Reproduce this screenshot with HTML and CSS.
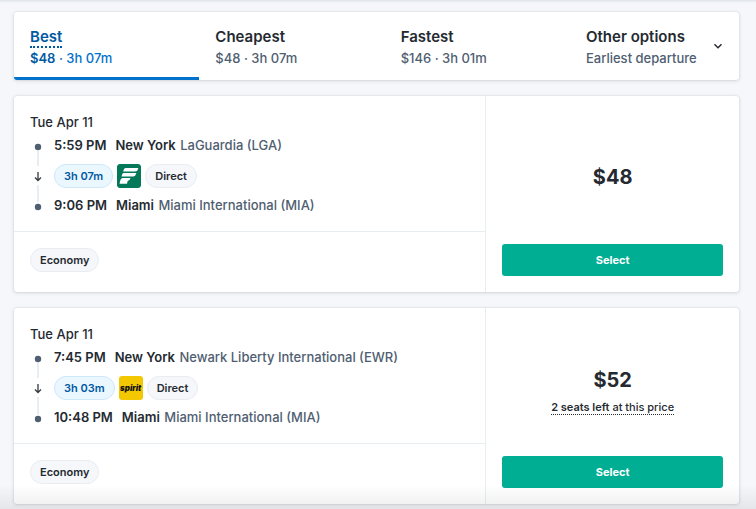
FILE: index.html
```html
<!DOCTYPE html>
<html lang="en">
<head>
<meta charset="utf-8">
<meta name="viewport" content="width=device-width, initial-scale=1">
<title>Flight results</title>
<link rel="stylesheet" href="styles.css">
</head>
<body>
<main class="results">
  <nav class="tabs" aria-label="Sort results">
    <button type="button" class="tab tab-active"><span class="tab-title"><span class="hint">Best</span></span><span class="tab-info"><b>$48</b> · 3h 07m</span></button>
    <button type="button" class="tab"><span class="tab-title">Cheapest</span><span class="tab-info">$48 · 3h 07m</span></button>
    <button type="button" class="tab"><span class="tab-title">Fastest</span><span class="tab-info">$146 · 3h 01m</span></button>
    <button type="button" class="tab tab-more">
      <span><span class="tab-title">Other options</span><span class="tab-info">Earliest departure</span></span>
      <svg class="chevron" viewBox="0 0 10 10" aria-hidden="true"><path d="M1.500 1.200 5 4.800l3.500-3.600"/></svg>
    </button>
  </nav>

  <article class="card">
    <div class="details">
      <section class="trip">
        <p class="date">Tue Apr 11</p>
        <div class="route">
          <svg class="timeline" viewBox="0 0 16 82" aria-hidden="true"><path class="rail" d="M8 17v15M8 51v17"/><circle cx="8" cy="13" r="3.200"/><circle cx="8" cy="73" r="3.200"/><path class="arrow" d="M8 38v8M5 43.500 8 46.500l3-3"/></svg>
          <div class="stops">
            <p class="stop"><b class="time">5:59 PM</b><b>New York</b> <span class="airport">LaGuardia (LGA)</span></p>
            <div class="leg">
              <span class="pill pill-time">3h 07m</span>
              <svg class="airline" viewBox="0 0 24 24" role="img" aria-label="Frontier"><rect width="24" height="24" rx="2" fill="#04795a"/><path fill="#fff" d="M8.700 4H21.300Q20.700 7.500 18 7.500H6.200Q6.800 4 8.700 4ZM6.700 9H19.300Q18.500 12.500 16 12.500H4.600Q5 9 6.700 9ZM5.500 14H13.500Q12.700 17 10.700 17.100L10 19.800H2.600Q3.300 14.300 5.500 14Z"/></svg>
              <span class="pill">Direct</span>
            </div>
            <p class="stop"><b class="time">9:06 PM</b><b>Miami</b> <span class="airport">Miami International (MIA)</span></p>
          </div>
        </div>
      </section>
      <footer class="fare"><span class="pill">Economy</span></footer>
    </div>
    <aside class="offer">
      <div class="cost"><strong class="price">$48</strong></div>
      <button type="button" class="select">Select</button>
    </aside>
  </article>

  <article class="card">
    <div class="details">
      <section class="trip">
        <p class="date">Tue Apr 11</p>
        <div class="route">
          <svg class="timeline" viewBox="0 0 16 82" aria-hidden="true"><path class="rail" d="M8 17v15M8 51v17"/><circle cx="8" cy="13" r="3.200"/><circle cx="8" cy="73" r="3.200"/><path class="arrow" d="M8 38v8M5 43.500 8 46.500l3-3"/></svg>
          <div class="stops">
            <p class="stop"><b class="time">7:45 PM</b><b>New York</b> <span class="airport">Newark Liberty International (EWR)</span></p>
            <div class="leg">
              <span class="pill pill-time">3h 03m</span>
              <span class="airline spirit">spirit</span>
              <span class="pill">Direct</span>
            </div>
            <p class="stop"><b class="time">10:48 PM</b><b>Miami</b> <span class="airport">Miami International (MIA)</span></p>
          </div>
        </div>
      </section>
      <footer class="fare"><span class="pill">Economy</span></footer>
    </div>
    <aside class="offer">
      <div class="cost"><strong class="price">$52</strong><span class="seats"><span class="hint"><b>2 seats left</b> at this price</span></span></div>
      <button type="button" class="select">Select</button>
    </aside>
  </article>
</main>
<div class="fade"></div>
</body>
</html>
```
FILE: styles.css
```css
* { box-sizing: border-box; }
body {
  margin: 0;
  background: #f5f7fa;
  color: #252a31;
  font-family: Inter, "Liberation Sans", sans-serif;
  font-size: 13px;
}
p { margin: 0; }
b { font-weight: 600; }
button { font: inherit; color: inherit; border: 0; cursor: pointer; }
.results {
  display: flex;
  flex-direction: column;
  gap: 16px;
  padding: 12px 17px 5px 14px;
  box-shadow: inset 0 3px 3px -2px #d9dde3;
}
.tabs, .card {
  display: grid;
  background: #fff;
  border-radius: 3px;
  box-shadow: 0 0 2px rgba(37, 42, 49, .16), 0 1px 4px rgba(37, 42, 49, .12);
}
.tabs { grid-template-columns: repeat(3, 1fr) 169px; overflow: hidden; }
.tab {
  padding: 15px 16px 9px;
  background: none;
  border-bottom: 3px solid transparent;
  text-align: left;
}
.tab-active { color: #0172cb; border-color: #0172cb; }
.tab-active .tab-title, .tab-active b { color: #005aa3; }
.tab-title, .tab-info { display: block; white-space: nowrap; }
.tab-title { font-size: 15px; font-weight: 600; line-height: 20px; }
.tab-info { font-weight: 500; line-height: 20px; margin-top: 1px; color: #4f5e71; }
.tab-active .tab-info { color: inherit; }
.tab-active .hint { border-bottom: 2px dotted #005aa3; }
.tab-more { display: flex; justify-content: space-between; align-items: center; }
.chevron { width: 10px; height: 10px; fill: none; stroke: #252a31; stroke-width: 1.400; }

.card { grid-template-columns: 65fr 35fr; }
.trip { padding: 14px 16px 15px; }
.date { line-height: 24px; font-weight: 500; }
.route { display: flex; gap: 8px; }
.timeline { flex: none; width: 16px; height: 82px; fill: #4f5e71; }
.rail { stroke: #e8edf1; stroke-width: 2; }
.arrow { fill: none; stroke: #343a42; stroke-width: 1.300; }
.stop { line-height: 22px; color: #4f5e71; font-weight: 500; }
.stop b { color: #252a31; }
.stop .time { margin-right: 9px; }
.airport { margin-left: 1px; }
.leg { display: flex; align-items: center; gap: 4px; height: 38px; padding-top: 2px; }
.pill {
  height: 24px;
  padding: 0 9px;
  border: 1px solid #e8edf1;
  border-radius: 12px;
  background: #f5f7fa;
  font-size: 11px;
  font-weight: 600;
  line-height: 22px;
}
.pill-time { background: #ebf7ff; border-color: #cfe7fa; color: #005aa3; }
.airline { width: 24px; height: 24px; border-radius: 3px; }
.spirit {
  display: flex;
  align-items: center;
  justify-content: center;
  background: #f4c800;
  color: #111;
  font-size: 8px;
  font-weight: 900;
  font-style: italic;
  line-height: 22px;
}
.fare { display: flex; padding: 16px 16px 20px; border-top: 1px solid #e8edf1; }
.offer {
  display: flex;
  flex-direction: column;
  gap: 2px;
  padding: 16px;
  border-left: 1px solid #e8edf1;
}
.cost { flex: 1; display: flex; flex-direction: column; align-items: center; justify-content: center; }
.price { font-size: 20px; font-weight: 700; line-height: 36px; }
.seats { font-size: 11px; font-weight: 500; line-height: 18px; }
.seats .hint { border-bottom: 1px dotted #252a31; }
.select {
  height: 32px;
  background: #00ae93;
  border-radius: 3px;
  color: #fff;
  font-size: 11px;
  font-weight: 700;
}
.fade {
  position: fixed;
  inset: auto 0 0;
  height: 24px;
  background: linear-gradient(transparent, rgba(37, 42, 49, .08));
  pointer-events: none;
}
```
